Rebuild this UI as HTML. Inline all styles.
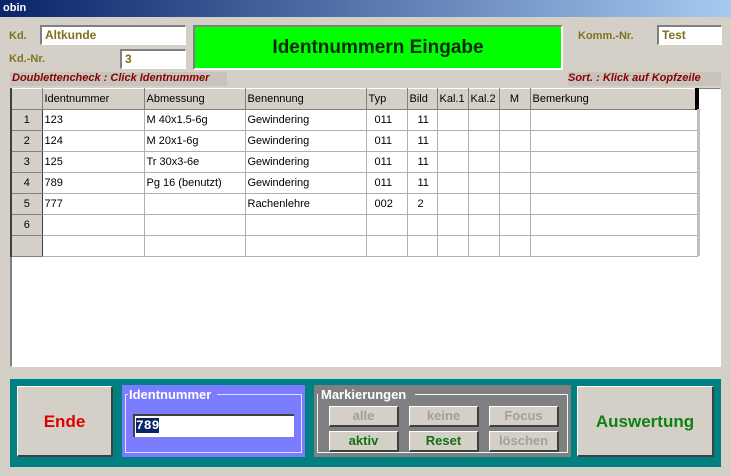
<!DOCTYPE html>
<html><head><style>
*{box-sizing:border-box;margin:0;padding:0}
body{width:731px;height:476px;background:#d4d0c8;font-family:"Liberation Sans",sans-serif;position:relative;overflow:hidden;font-size:11px}
.a{position:absolute}
.title{left:0;top:0;width:731px;height:17px;background:linear-gradient(90deg,#0a246a,#a6caf0);color:#fff;font-weight:bold;font-size:11px;padding:2px 3px}
.lbl{color:#807020;font-weight:bold;font-size:11px}
.inp{background:#fff;border-top:2px solid #808080;border-left:2px solid #808080;border-right:1px solid #fff;border-bottom:1px solid #fff;color:#807020;font-weight:bold;font-size:12px;padding:1px 3px}
.red{color:#8b0000;font-weight:bold;font-style:italic;font-size:11px;background:#c8c4bc}
table{border-collapse:collapse;position:absolute;left:10px;top:88px;table-layout:fixed}
td{border-right:1px solid #b0b0b0;border-bottom:1px solid #b0b0b0;height:21px;font-size:11px;padding:0 2px;white-space:nowrap;overflow:hidden;background:#fff}
tr.h td{background:#d4d0c8;border-right:1px solid #808080;border-bottom:1px solid #808080;border-top:1px solid #fff}
td.rh{background:#d4d0c8;text-align:center;border-right:1px solid #404040;border-left:2px solid #404040;border-bottom:1px solid #808080}
.btn{background:#d4d0c8;border-top:1px solid #fff;border-left:1px solid #fff;border-right:2px solid #404040;border-bottom:2px solid #404040;text-align:center;font-weight:bold}
.sb{font-size:13px;line-height:17px}
</style></head><body>
<div class="a title">obin</div>
<div class="a lbl" style="left:9px;top:30px">Kd.</div>
<div class="a inp" style="left:40px;top:25px;width:146px;height:20px">Altkunde</div>
<div class="a lbl" style="left:9px;top:53px">Kd.-Nr.</div>
<div class="a inp" style="left:120px;top:49px;width:66px;height:20px">3</div>
<div class="a" style="left:193px;top:25px;width:370px;height:45px;background:#00ff00;border:2px solid #808080;border-right-color:#fff;border-bottom-color:#fff;font-weight:bold;font-size:19px;text-align:center;line-height:41px;color:#0a2a0a">Identnummern Eingabe</div>
<div class="a lbl" style="left:578px;top:30px">Komm.-Nr.</div>
<div class="a inp" style="left:657px;top:25px;width:65px;height:20px">Test</div>
<div class="a red" style="left:10px;top:72px;width:217px;height:14px;padding-left:2px">Doublettencheck : Click Identnummer</div>
<div class="a red" style="left:568px;top:72px;width:153px;height:14px">Sort. : Klick auf Kopfzeile</div>
<div class="a" style="left:10px;top:88px;width:711px;height:279px;background:#fff;border-left:2px solid #808080;border-top:1px solid #808080;border-right:1px solid #fff;border-bottom:1px solid #fff"></div>
<table>
<colgroup><col style="width:31px"><col style="width:102px"><col style="width:101px"><col style="width:121px"><col style="width:41px"><col style="width:30px"><col style="width:31px"><col style="width:31px"><col style="width:31px"><col style="width:167px"></colgroup>
<tr class="h"><td class="rh"></td><td>Identnummer</td><td>Abmessung</td><td>Benennung</td><td>Typ</td><td>Bild</td><td>Kal.1</td><td>Kal.2</td><td style="text-align:center">M</td><td style="border-right:4px solid #000">Bemerkung</td></tr>
<tr><td class="rh">1</td><td>123</td><td>M 40x1.5-6g</td><td>Gewindering</td><td style="padding-left:8px">011</td><td style="padding-left:10px">11</td><td></td><td></td><td></td><td></td></tr>
<tr><td class="rh">2</td><td>124</td><td>M 20x1-6g</td><td>Gewindering</td><td style="padding-left:8px">011</td><td style="padding-left:10px">11</td><td></td><td></td><td></td><td></td></tr>
<tr><td class="rh">3</td><td>125</td><td>Tr 30x3-6e</td><td>Gewindering</td><td style="padding-left:8px">011</td><td style="padding-left:10px">11</td><td></td><td></td><td></td><td></td></tr>
<tr><td class="rh">4</td><td>789</td><td>Pg 16 (benutzt)</td><td>Gewindering</td><td style="padding-left:8px">011</td><td style="padding-left:10px">11</td><td></td><td></td><td></td><td></td></tr>
<tr><td class="rh">5</td><td>777</td><td></td><td>Rachenlehre</td><td style="padding-left:8px">002</td><td style="padding-left:10px">2</td><td></td><td></td><td></td><td></td></tr>
<tr><td class="rh">6</td><td></td><td></td><td></td><td></td><td></td><td></td><td></td><td></td><td></td></tr>
<tr><td class="rh"></td><td></td><td></td><td></td><td></td><td></td><td></td><td></td><td></td><td></td></tr>
</table>
<div class="a" style="left:697px;top:109px;width:3px;height:147px;background:#c0c0c0"></div>
<div class="a" style="left:10px;top:378px;width:711px;height:89px;background:#008080;border-top:1px solid #a0e0e0"></div>
<div class="a btn" style="left:17px;top:386px;width:96px;height:71px;line-height:70px;color:#e00000;font-size:17px">Ende</div>
<div class="a" style="left:122px;top:385px;width:183px;height:72px;background:#7b7bff"></div>
<div class="a" style="left:125px;top:394px;width:177px;height:59px;border:1px solid #e0e0ff;border-top:none"></div>
<div class="a" style="left:125px;top:394px;width:3px;border-top:1px solid #e0e0ff"></div>
<div class="a" style="left:217px;top:394px;width:85px;border-top:1px solid #e0e0ff"></div>
<div class="a" style="left:129px;top:387px;color:#fff;font-weight:bold;font-size:13px">Identnummer</div>
<div class="a" style="left:133px;top:414px;width:161px;height:23px;background:#fff;border-top:2px solid #404040;border-left:2px solid #404040;padding:2px 1px;font-size:13px;font-family:'Liberation Mono',monospace"><span style="background:#0a246a;color:#fff;font-weight:bold">789</span></div>
<div class="a" style="left:314px;top:385px;width:257px;height:72px;background:#808080"></div>
<div class="a" style="left:317px;top:394px;width:251px;height:59px;border:1px solid #e0ffff;border-top:none"></div>
<div class="a" style="left:415px;top:394px;width:153px;border-top:1px solid #e0ffff"></div>
<div class="a" style="left:321px;top:387px;color:#fff;font-weight:bold;font-size:13px">Markierungen</div>
<div class="a btn sb" style="left:329px;top:406px;width:70px;height:21px;color:#a0a0a0">alle</div>
<div class="a btn sb" style="left:409px;top:406px;width:70px;height:21px;color:#a0a0a0">keine</div>
<div class="a btn sb" style="left:489px;top:406px;width:70px;height:21px;color:#a0a0a0">Focus</div>
<div class="a btn sb" style="left:329px;top:431px;width:70px;height:21px;color:#107010">aktiv</div>
<div class="a btn sb" style="left:409px;top:431px;width:70px;height:21px;color:#107010">Reset</div>
<div class="a btn sb" style="left:489px;top:431px;width:70px;height:21px;color:#a0a0a0">löschen</div>
<div class="a btn" style="left:577px;top:386px;width:137px;height:71px;line-height:70px;color:#108010;font-size:17px">Auswertung</div>
</body></html>
